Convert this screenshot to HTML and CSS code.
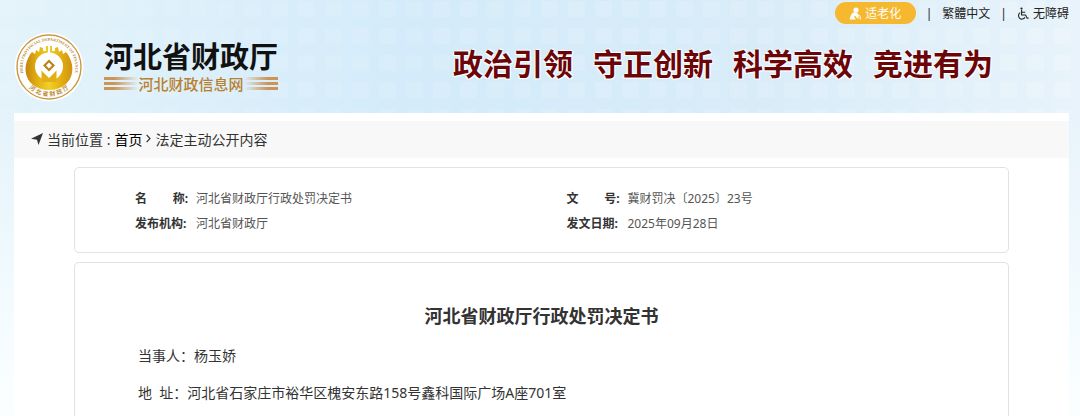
FILE: index.html
```html
<!DOCTYPE html>
<html lang="zh-CN">
<head>
    <meta charset="UTF-8">
    <meta name="viewport" content="width=device-width, initial-scale=1.0">
    <title>河北省财政厅行政处罚决定书</title>
    <link rel="stylesheet" href="styles.css">
</head>
<body>
    <!-- 背景方格 -->
    <svg class="bg-grid" aria-hidden="true">
        <defs>
            <pattern id="squares" width="27" height="27" patternUnits="userSpaceOnUse">
                <rect x="1" y="1" width="17" height="16" rx="2" fill="#fff" fill-opacity="0.16"/>
            </pattern>
            <linearGradient id="fade">
                <stop offset="0" stop-color="#fff" stop-opacity="0.4"/>
                <stop offset="0.45" stop-color="#fff" stop-opacity="0.8"/>
                <stop offset="1" stop-color="#fff"/>
            </linearGradient>
            <mask id="fade-mask">
                <rect width="100%" height="100%" fill="url(#fade)"/>
            </mask>
        </defs>
        <rect width="100%" height="100%" fill="url(#squares)" mask="url(#fade-mask)"/>
    </svg>

    <div class="container">
        <header class="header">
            <nav class="top-links">
                <button type="button" class="btn-old">
                    <svg width="12" height="13" viewBox="0 0 12 13" fill="#fff">
                        <circle cx="7" cy="3" r="2.6"/>
                        <path d="M4.6 5.2C2.8 6.4 1.2 8.6.6 12.4h6.2L5 9.6l1-.8 2.4 2.6 1.2-.2-.2-3.6C9 6.4 8.2 5.8 7.2 5.8z"/>
                        <path d="M8.4 9.4c1-1.4 2.8-1.2 2.8.4v2.8" fill="none" stroke="#fff"/>
                    </svg>
                    适老化
                </button>
                <span class="sep">|</span>
                <a href="#">繁體中文</a>
                <span class="sep">|</span>
                <a href="#" class="link-access">
                    <svg width="12" height="13" viewBox="0 0 12 13" fill="none" stroke="#222" stroke-width="1.1">
                        <circle cx="4.5" cy="1.6" r="1.1" fill="#222" stroke="none"/>
                        <path d="M4.6 3v5h4l1.6 3.4 1.4-.6M4.6 5.2h3.600M3.200 5.600A3.500 3.500 0 1 0 8 10.400"/>
                    </svg>
                    无障碍
                </a>
            </nav>
            <div class="banner">
                <a href="#" class="logo">
                    <svg class="emblem" width="70" height="70" viewBox="0 0 70 70">
                        <defs>
                            <linearGradient id="gold" x1="0" y1="0" x2="1" y2="0">
                                <stop offset="0" stop-color="#c4840f"/>
                                <stop offset="0.25" stop-color="#e3b010"/>
                                <stop offset="0.5" stop-color="#efd02a"/>
                                <stop offset="0.75" stop-color="#e3b010"/>
                                <stop offset="1" stop-color="#cf9212"/>
                            </linearGradient>
                            <path id="arc-top" d="M14.5 51.5A26.3 26.3 0 1 1 55.5 51.5"/>
                            <path id="arc-bottom" d="M13.5 54.5A29 29 0 0 0 56.5 54.5"/>
                        </defs>
                        <circle cx="35" cy="35" r="34.5" fill="#fff"/>
                        <circle cx="35" cy="35" r="32" fill="none" stroke="#c99a45" stroke-width="1.4"/>
                        <!-- 城墙 -->
                        <path d="M18 20l3 2 1-4 3 2 1-5 3 1v3h3v-5h2v7h2v-7h2v5h3v-3l3-1 1 5 3-2 1 4 3-2C61 31 60 45 52 52 43 60 27 60 18 52 10 45 9 31 18 20z" fill="url(#gold)"/>
                        <circle cx="35" cy="34.5" r="14" fill="#fff"/>
                        <path d="M35 14v8" stroke="#fff" stroke-width="1.6"/>
                        <path d="M27.5 50V38.5L35 46l7.5-7.5V50z" fill="#e2b016"/>
                        <path d="M35 27.5l6 6-6 6-6-6z" fill="#b98419"/>
                        <path d="M35 30.5l3 3-3 3-3-3z" fill="#fff"/>
                        <text class="seal-en"><textPath href="#arc-top" startOffset="50%">HEBEI PROVINCIAL DEPARTMENT OF FINANCE</textPath></text>
                        <text class="seal-cn"><textPath href="#arc-bottom" startOffset="50%">河 北 省 财 政 厅</textPath></text>
                    </svg>
                    <span class="logo-text">
                        <span class="logo-name">河北省财政厅</span>
                        <span class="logo-sub">河北财政信息网</span>
                    </span>
                </a>
                <p class="slogan">
                    <span>政治引领</span>
                    <span>守正创新</span>
                    <span>科学高效</span>
                    <span>竞进有为</span>
                </p>
            </div>
        </header>

        <main class="main">
            <!-- 当前位置 -->
            <nav class="location">
                <svg width="12" height="12" viewBox="0 0 12 12" fill="#333">
                    <path d="M12 0L7.5 12 6 6.8 0 5.8z"/>
                </svg>
                <span>当前位置 :</span>
                <a href="#">首页</a>
                <svg width="5" height="9" viewBox="0 0 5 9" fill="none" stroke="#333" stroke-width="1.2">
                    <path d="M.6.8l3.4 3.7L.6 8.2"/>
                </svg>
                <span>法定主动公开内容</span>
            </nav>

            <dl class="card info">
                <div class="info-item"><dt><span>名</span><span>称:</span></dt><dd>河北省财政厅行政处罚决定书</dd></div>
                <div class="info-item"><dt><span>文</span><span>号:</span></dt><dd>冀财罚决〔2025〕23号</dd></div>
                <div class="info-item"><dt>发布机构:</dt><dd>河北省财政厅</dd></div>
                <div class="info-item"><dt>发文日期:</dt><dd>2025年09月28日</dd></div>
            </dl>

            <article class="card article">
                <h1>河北省财政厅行政处罚决定书</h1>
                <p>当事人：杨玉娇</p>
                <p>地&nbsp; 址：河北省石家庄市裕华区槐安东路158号鑫科国际广场A座701室</p>
            </article>
        </main>
    </div>
</body>
</html>
```

FILE: styles.css
```css
* {
    box-sizing: border-box;
    margin: 0;
    padding: 0;
}
body {
    font-family: "Noto Sans", "Noto Sans CJK SC", sans-serif;
    font-size: 14px;
    color: #333;
    background: linear-gradient(to bottom, transparent 110px, #f5fcff 330px, #fbfeff 416px),
        linear-gradient(to right, #e4f3fa, #d3ebfa 38%, #d8ecf8 70%, #e8f3fb);
    background-repeat: no-repeat;
    min-height: 100vh;
}
a {
    color: inherit;
    text-decoration: none;
}
.bg-grid {
    position: absolute;
    top: 0;
    left: 0;
    width: 100%;
    height: 113px;
}
.container {
    position: relative;
    display: flex;
    flex-direction: column;
    min-height: 100vh;
    margin: 0 11px 0 14px;
}

/* 顶部 */
.header {
    padding-bottom: 6px;
}
.top-links {
    display: flex;
    justify-content: flex-end;
    align-items: center;
    gap: 10px;
    height: 26px;
    font-size: 12px;
    color: #222;
}
.btn-old {
    display: flex;
    align-items: center;
    justify-content: center;
    gap: 4px;
    width: 81px;
    height: 22px;
    border: none;
    border-radius: 11px;
    background: #f5b82e;
    color: #fff;
    font-family: inherit;
    font-size: 12px;
    cursor: pointer;
}
.link-access {
    display: flex;
    align-items: center;
    gap: 4px;
}
.banner {
    display: flex;
    justify-content: space-between;
    align-items: center;
    padding-right: 76px;
    height: 81px;
}
.logo {
    display: flex;
    align-items: center;
    gap: 20px;
}
.seal-en,
.seal-cn {
    fill: #bd8a35;
    text-anchor: middle;
}
.seal-en {
    font-family: "Liberation Serif", serif;
    font-size: 4px;
    font-weight: bold;
}
.seal-cn {
    font-size: 6px;
    font-weight: bold;
}
.logo-text {
    display: flex;
    flex-direction: column;
}
.logo-name {
    font-size: 29px;
    font-weight: bold;
    line-height: 34px;
    color: #111;
}
.logo-sub {
    display: flex;
    align-items: center;
    justify-content: space-between;
    font-size: 15px;
    font-weight: 500;
    line-height: 20px;
    color: #b8802f;
}
.logo-sub::before,
.logo-sub::after {
    content: "";
    width: 34px;
    height: 13px;
    background: repeating-linear-gradient(to bottom, #cc9558 0, #cc9558 3px, transparent 3px, transparent 5px);
    -webkit-mask: linear-gradient(to right, #000 30%, transparent);
    mask: linear-gradient(to right, #000 30%, transparent);
}
.logo-sub::after {
    -webkit-mask: linear-gradient(to left, #000 30%, transparent);
    mask: linear-gradient(to left, #000 30%, transparent);
}
.slogan {
    display: flex;
    gap: 20px;
    padding-bottom: 6px;
    font-size: 30px;
    font-weight: bold;
    line-height: 40px;
    color: #6b0508;
    text-shadow: 1px 1px 1px #fff, -1px 1px 1px #fff, 1px -1px 1px #fff;
}

/* 内容 */
.main {
    flex: 1;
    display: flex;
    flex-direction: column;
    background: #fff;
    padding-top: 8px;
}
.location {
    display: flex;
    align-items: center;
    gap: 4px;
    height: 37px;
    padding: 0 17px 2px;
    background: #f8f8f8;
}
.location a {
    color: #000;
}
.card {
    margin: 9px 60px 0;
    border: 1px solid #e2e2e2;
    border-radius: 5px;
}
.info {
    display: grid;
    grid-template-columns: 1fr 1fr;
    padding: 18px 10px 16px 60px;
    font-size: 12px;
    line-height: 25px;
}
.info-item {
    display: flex;
    gap: 8px;
}
.info dt {
    display: flex;
    justify-content: space-between;
    width: 53px;
    font-weight: bold;
}
.info dd {
    color: #555;
}
.article {
    flex: 1;
    padding: 35px 35px 0;
    border-bottom: none;
    border-radius: 5px 5px 0 0;
}
.article h1 {
    margin-bottom: 3px;
    font-size: 18px;
    line-height: 36px;
    text-align: center;
}
.article p {
    line-height: 37px;
    text-indent: 2em;
}
```
